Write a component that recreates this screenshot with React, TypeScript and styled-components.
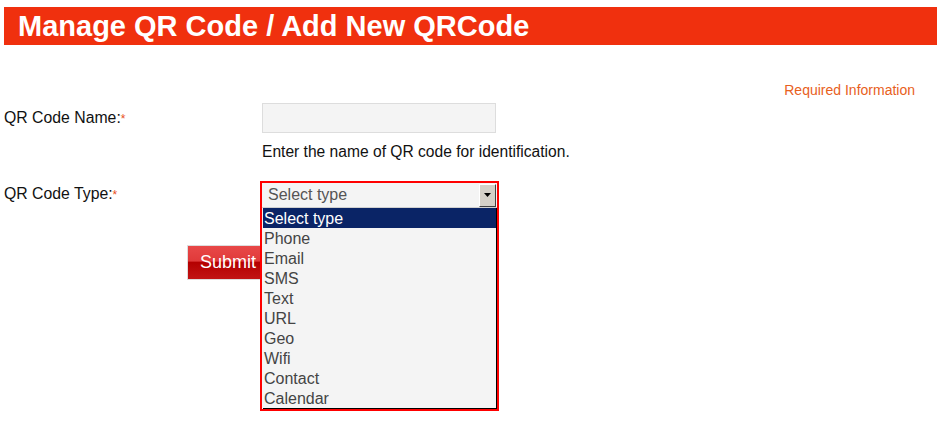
import React from "react";
import styled, { createGlobalStyle } from "styled-components";

const Global = createGlobalStyle`
  html, body { margin: 0; padding: 0; background: #fff; }
  body { font-family: "Liberation Sans", Arial, sans-serif; color: #111; }
`;

const Page = styled.div`
  box-sizing: border-box;
  min-height: 432px;
  padding: 7px 6px 0 4px;
`;

const Header = styled.h1`
  margin: 0;
  height: 38px;
  background: #f0300e;
  color: #fff;
  font-size: 29px;
  font-weight: bold;
  line-height: 39px;
  padding-left: 14px;
`;

const RequiredNote = styled.div`
  display: flex;
  justify-content: flex-end;
  padding: 37px 22px 0 0;
  color: #e8601c;
  font-size: 14px;
  line-height: 16px;
`;

const Form = styled.div`
  display: flex;
  flex-direction: column;
  margin-top: 5px;
`;

const Row = styled.div<{ $gap?: number }>`
  display: grid;
  grid-template-columns: 258px 1fr;
  margin-bottom: ${(p) => p.$gap ?? 0}px;
`;

const Label = styled.label<{ $top: number }>`
  font-size: 15.8px;
  line-height: 18px;
  padding-top: ${(p) => p.$top}px;
  color: #111;
`;

const Star = styled.span`
  color: #e8501c;
  font-size: 12px;
  vertical-align: top;
  position: relative;
  top: 1px;
`;

const Field = styled.div`
  display: flex;
  flex-direction: column;
`;

const TextInput = styled.input`
  box-sizing: border-box;
  width: 234px;
  height: 30px;
  background: #f4f4f4;
  border: 1px solid #ddd;
  margin: 0;
`;

const Hint = styled.div`
  font-size: 15.6px;
  line-height: 18px;
  margin-top: 10px;
  color: #111;
`;

const SelectWrap = styled.div`
  position: relative;
  height: 27px;
  margin-left: -2px;
`;

const Popup = styled.div`
  position: absolute;
  top: 0;
  left: 0;
  width: 235px;
  border: 2px solid #ff0000;
  background: #f4f4f4;
  z-index: 2;
`;

const SelectBox = styled.div`
  display: flex;
  align-items: center;
  justify-content: space-between;
  height: 24px;
  border-bottom: 1px solid #d0d0d0;
  padding-left: 6px;
  color: #555;
  font-size: 16px;
`;

const ArrowBtn = styled.div`
  box-sizing: border-box;
  width: 17px;
  height: 23px;
  margin-right: 1px;
  background: #d4d0c8;
  border: 1px solid;
  border-color: #fff #404040 #404040 #fff;
  display: flex;
  align-items: center;
  justify-content: center;
`;

const List = styled.ul`
  list-style: none;
  margin: 0;
  padding: 0;
  border-right: 1px solid #000;
  border-bottom: 1px solid #000;
  margin-left: 1px;
  width: 233px;
`;

const Option = styled.li<{ $active?: boolean }>`
  height: 20px;
  line-height: 21px;
  font-size: 16px;
  padding-left: 1px;
  color: ${(p) => (p.$active ? "#fff" : "#444")};
  background: ${(p) => (p.$active ? "#0a2466" : "transparent")};
`;

const SubmitRow = styled.div`
  padding: 37px 0 0 183px;
`;

const SubmitButton = styled.button`
  width: 110px;
  height: 35px;
  border: 1px solid #ddd;
  border-right: none;
  background: linear-gradient(#e84848 0%, #e03a3a 45%, #b40000 50%, #c21414 100%);
  color: #fff;
  font-family: "Liberation Sans", Arial, sans-serif;
  font-size: 18px;
  text-align: left;
  padding: 0 0 0 12px;
`;

const options = ["Select type", "Phone", "Email", "SMS", "Text", "URL", "Geo", "Wifi", "Contact", "Calendar"];

export default function App() {
  return (
    <Page>
      <Global />
      <Header>Manage QR Code / Add New QRCode</Header>
      <RequiredNote>Required Information</RequiredNote>
      <Form>
        <Row $gap={20}>
          <Label $top={6}>
            QR Code Name:<Star>*</Star>
          </Label>
          <Field>
            <TextInput type="text" />
            <Hint>Enter the name of QR code for identification.</Hint>
          </Field>
        </Row>
        <Row>
          <Label $top={4}>
            QR Code Type:<Star>*</Star>
          </Label>
          <SelectWrap>
            <Popup>
              <SelectBox>
                Select type
                <ArrowBtn>
                  <svg width="7" height="4" viewBox="0 0 7 4">
                    <path d="M0 0h7L3.5 4z" fill="#000" />
                  </svg>
                </ArrowBtn>
              </SelectBox>
              <List>
                {options.map((o, i) => (
                  <Option key={o} $active={i === 0}>
                    {o}
                  </Option>
                ))}
              </List>
            </Popup>
          </SelectWrap>
        </Row>
        <SubmitRow>
          <SubmitButton>Submit</SubmitButton>
        </SubmitRow>
      </Form>
    </Page>
  );
}
